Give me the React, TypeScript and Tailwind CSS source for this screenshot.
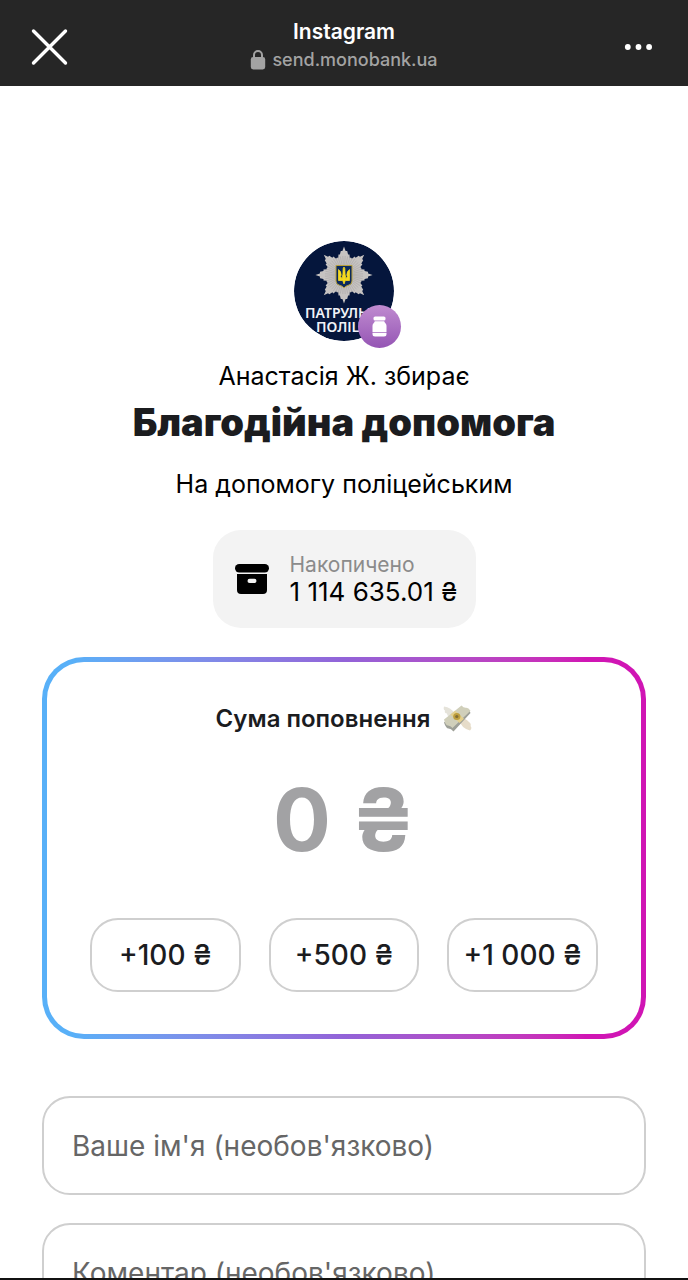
import React, { useState } from 'react';

const quickAmounts = [
  { value: 100, label: '+100 ₴' },
  { value: 500, label: '+500 ₴' },
  { value: 1000, label: '+1 000 ₴' },
];

const formatAmount = (value: number) => String(value).replace(/\B(?=(\d{3})+(?!\d))/g, ' ');

const polar = (radius: number, angle: number) => ({
  x: Number((50 + radius * Math.sin(angle)).toFixed(1)),
  y: Number((34 - radius * Math.cos(angle)).toFixed(1)),
});

// eight tips, the edge between them is serrated
const starPoints = Array.from({ length: 96 }, (_, i) => {
  const step = i % 12;
  const fromTip = Math.min(step, 12 - step) / 6;
  const radius = 28 - 10 * Math.pow(fromTip, 0.75) + (i % 2 === 0 ? 0.6 : -1.2);
  const { x, y } = polar(radius, (i * Math.PI) / 48);
  return `${x},${y}`;
}).join(' ');

const starRays = Array.from({ length: 48 }, (_, i) => polar(19, ((i + 0.5) * Math.PI) / 24));

function CloseIcon() {
  return (
    <svg className="w-10 h-10" viewBox="0 0 40 40" fill="none" stroke="#fff" strokeWidth="3.4" strokeLinecap="round">
      <path d="M3.5 4 35.5 36M35.5 4 3.5 36" />
    </svg>
  );
}

function DotsIcon() {
  return (
    <svg className="w-7 h-2" viewBox="0 0 28 8" fill="#fff">
      <circle cx="3.8" cy="4" r="2.9" />
      <circle cx="14.5" cy="4" r="2.9" />
      <circle cx="25.1" cy="4" r="2.9" />
    </svg>
  );
}

function LockIcon() {
  return (
    <svg className="w-4 h-5" viewBox="0 0 16 20">
      <path d="M4 9V5a4 4 0 0 1 8 0v4" fill="none" stroke="#a3a3a3" strokeWidth="2" />
      <rect x="0.8" y="7" width="14.4" height="12.5" rx="2.4" fill="#a3a3a3" />
    </svg>
  );
}

function PoliceAvatar() {
  return (
    <svg className="w-[100px] h-[100px] rounded-full" viewBox="0 0 100 100" role="img" aria-label="Патрульна поліція">
      <circle cx="50" cy="50" r="50" fill="#05163c" />
      <polygon points={starPoints} fill="#c6c3c1" />
      {starRays.map((ray, i) => (
        <line key={i} x1="50" y1="34" x2={ray.x} y2={ray.y} stroke="#a9a6a6" strokeWidth="0.6" />
      ))}
      <path d="M42 24.5h16v15.5q0 3.5-3.5 4.2-3 .7-4.5 2.8-1.5-2.1-4.5-2.8Q42 43.5 42 40z" fill="#0c2a5e" stroke="#b8a03c" strokeWidth="1" />
      <path
        d="M44.5 28.5v11h4.2l1.3 3.5 1.3-3.5h4.2v-11q-2.5 1.5-2.7 5.5l.7 1.8-1.6 1.6Q50.8 34 50.8 27.5L50 26l-.8 1.5q0 6.5-1.1 9.9l-1.6-1.6.7-1.8q-.2-4-2.7-5.5z"
        fill="#f5d91f"
        stroke="#f5d91f"
        strokeWidth="0.8"
      />
      <g fill="#f1f3f8" fontFamily="'Noto Sans', sans-serif" fontWeight="600" fontSize="14">
        <text x="11" y="77">ПАТРУЛЬНА</text>
        <text x="22" y="91">ПОЛІЦІЯ</text>
      </g>
    </svg>
  );
}

function JarIcon() {
  return (
    <svg className="w-5 h-6" viewBox="0 0 20 24" fill="#fff">
      <rect x="3.5" y="1.5" width="12" height="4" rx="1.6" />
      <path d="M4.8 6.3h9.4c.2 1.600 2.300 2.200 2.300 4.500v6.200h-14v-6.200c0-2.300 2.100-2.900 2.300-4.500z" />
      <path d="M2.500 17.800h14v1.200a2.500 2.500 0 0 1-2.500 2.500H5A2.500 2.500 0 0 1 2.500 19z" />
    </svg>
  );
}

function BoxIcon() {
  return (
    <svg className="w-[34px] h-[30px]" viewBox="0 0 34 30">
      <rect width="34" height="8.5" rx="4.2" fill="#000" />
      <path d="M2 10h30v16a4 4 0 0 1-4 4H6a4 4 0 0 1-4-4z" fill="#000" />
      <rect x="12.5" y="14.8" width="9" height="4.2" rx="2.1" fill="#f3f3f3" />
    </svg>
  );
}

function MoneyIcon() {
  return (
    <svg className="w-[30px] h-[28px]" viewBox="0 0 30 28">
      <path d="M13 9Q9 2 2 1.5q-1 3 1 4-1 2.500 2 3 0 3 4 3.500z" fill="#e5e3da" />
      <path d="M18 16q1 7 10 9.500 2.500-2.500.5-4.500 1-2.500-1.500-4Q23 12.500 18 13z" fill="#e6dcc9" />
      <path d="M2 17.500 20 2q2 3 4.500 2.500T28.500 8L11.500 26.500q-2.500-3-5-3T2 17.500z" fill="#9d9f97" />
      <path d="M2 14.500 19.500.5q2 2.500 4.500 2.300t4.500 3L10.500 23q-2-2.500-4.500-2.500T2 14.500z" fill="#d0cfba" />
      <path d="m8.500 9.500 4.500-3.700 9 8-4.500 4.200z" fill="#e3cf8c" />
      <circle cx="14.8" cy="11.5" r="3.6" fill="#bd9e3e" />
      <circle cx="14.8" cy="11.5" r="1.6" fill="#806c34" />
    </svg>
  );
}

function BrowserBar() {
  return (
    <header className="flex h-[86px] shrink-0 items-center justify-between bg-[#262626] px-[30px] pt-2">
      <button type="button" aria-label="Закрити" className="flex w-10 justify-center">
        <CloseIcon />
      </button>
      <div className="flex flex-col items-center pb-0.5">
        <span className="text-[21px] leading-7 font-semibold text-white">Instagram</span>
        <span className="flex items-center gap-1.5 text-[18px] leading-7 font-medium text-[#a3a3a3]">
          <LockIcon />
          send.monobank.ua
        </span>
      </div>
      <button type="button" aria-label="Меню" className="flex w-10 justify-center">
        <DotsIcon />
      </button>
    </header>
  );
}

export default function App() {
  const [amount, setAmount] = useState(0);

  return (
    <div className="flex h-screen flex-col bg-white font-['Inter',sans-serif] text-black">
      <BrowserBar />

      <main className="min-h-0 flex-1 overflow-hidden px-[42px] pt-[155px]">
        <section className="flex flex-col items-center text-center">
          <div className="relative">
            <PoliceAvatar />
            <div className="absolute -right-[7px] -bottom-[7px] flex h-[43px] w-[43px] items-center justify-center rounded-full bg-linear-to-b from-[#c08bd0] to-[#9555b4]">
              <JarIcon />
            </div>
          </div>
          <p className="mt-[19px] text-[25px] leading-8">Анастасія Ж. збирає</p>
          <h1 className="mt-[5px] text-[38px] leading-[50px] font-black text-[#1b1c1f]">Благодійна допомога</h1>
          <p className="mt-[21px] text-[25px] leading-8">На допомогу поліцейським</p>

          <div className="mt-[30px] flex h-[98px] items-center gap-[21px] rounded-[28px] bg-[#f3f3f3] pr-[18px] pl-[22px] text-left">
            <BoxIcon />
            <div className="pb-0.5">
              <div className="text-[21px] leading-[27px] text-[#8b8b8b]">Накопичено</div>
              <div className="text-[26px] leading-[27px]">1 114 635.01 ₴</div>
            </div>
          </div>
        </section>

        <section className="mt-[29px] rounded-[42px] bg-linear-to-r from-[#58b0f8] from-5% via-[#9263d8] to-[#d015b4] to-90% p-[5px]">
          <div className="rounded-[37px] bg-white px-[43px] pt-[41px] pb-[42px]">
            <label htmlFor="amount" className="flex items-center justify-center gap-3 text-[24px] leading-8 font-semibold text-[#1b1c1f]">
              Сума поповнення
              <MoneyIcon />
            </label>
            <input
              id="amount"
              type="text"
              inputMode="numeric"
              value={`${formatAmount(amount)} ₴`}
              onChange={(e) => setAmount(Number(e.target.value.replace(/\D/g, '')))}
              className="mt-[34px] block h-[102px] w-full text-center text-[86px] font-bold text-[#a2a2a4] outline-none"
            />
            <div className="mt-[47px] grid grid-cols-3 gap-7">
              {quickAmounts.map((item) => (
                <button
                  key={item.value}
                  type="button"
                  onClick={() => setAmount(amount + item.value)}
                  className="h-[74px] rounded-[28px] border-2 border-[#cfcfcf] text-[28px] font-medium whitespace-nowrap text-[#1b1c1f]"
                >
                  {item.label}
                </button>
              ))}
            </div>
          </div>
        </section>

        <form className="mt-[57px] flex flex-col gap-7">
          <input
            type="text"
            aria-label="Ваше ім'я"
            placeholder="Ваше ім'я (необов'язково)"
            className="h-[99px] w-full rounded-[28px] border-2 border-[#cfcfcf] px-7 text-[28px] outline-none placeholder:text-[#666]"
          />
          <input
            type="text"
            aria-label="Коментар"
            placeholder="Коментар (необов'язково)"
            className="h-[99px] w-full rounded-[28px] border-2 border-[#cfcfcf] px-7 text-[28px] outline-none placeholder:text-[#666]"
          />
        </form>
      </main>

      <div className="h-0.5 shrink-0 bg-[#111]" />
    </div>
  );
}
